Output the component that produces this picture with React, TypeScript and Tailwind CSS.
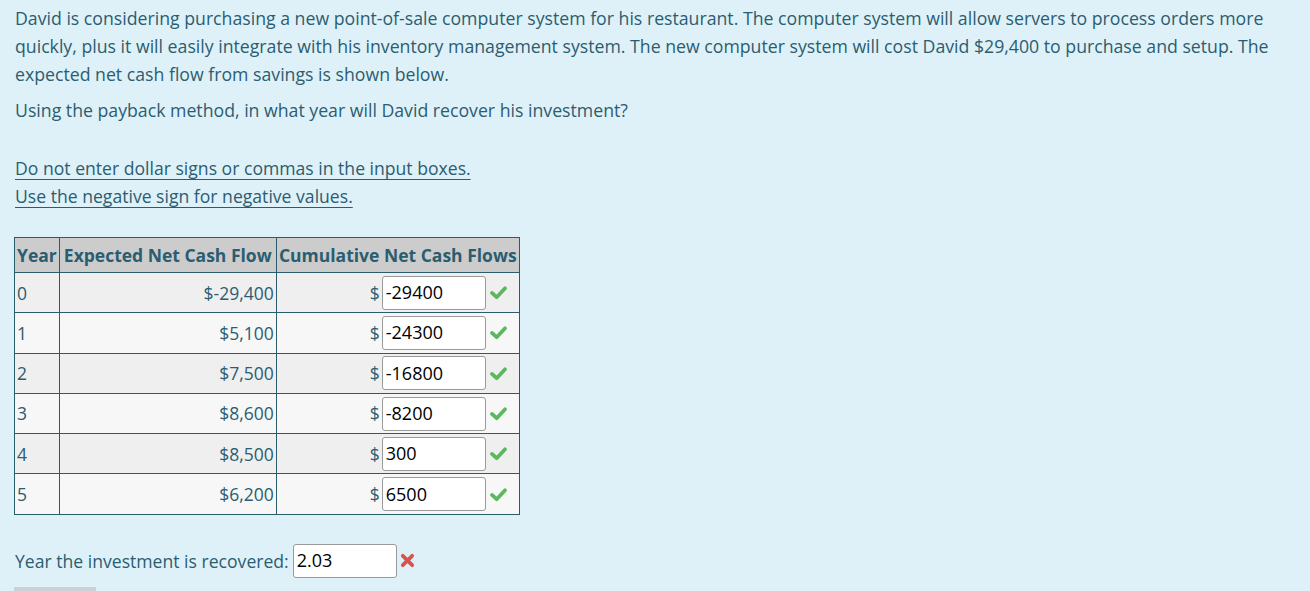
import React from 'react';

const rows = [
  { year: '0', flow: '$-29,400', cum: '-29400' },
  { year: '1', flow: '$5,100', cum: '-24300' },
  { year: '2', flow: '$7,500', cum: '-16800' },
  { year: '3', flow: '$8,600', cum: '-8200' },
  { year: '4', flow: '$8,500', cum: '300' },
  { year: '5', flow: '$6,200', cum: '6500' },
];

const Check = () => (
  <svg viewBox="0 0 20 16" className="ml-[3px] w-[19px] h-[15px] shrink-0">
    <polyline points="3,8.5 8,13 17,3.5" fill="none" stroke="#5cb85c" strokeWidth="4" strokeLinecap="round" strokeLinejoin="round" />
  </svg>
);

const Cross = () => (
  <svg viewBox="0 0 16 16" className="ml-[3px] w-[15px] h-[15px] shrink-0">
    <path d="M3 3 L13 13 M13 3 L3 13" fill="none" stroke="#d9534f" strokeWidth="4" strokeLinecap="round" />
  </svg>
);

export default function App() {
  return (
    <div
      className="w-[1310px] h-[591px] overflow-hidden bg-[#dff1f8] text-[#2b5d70] pl-[15px] pt-[4px]"
      style={{ fontFamily: '"Open Sans", "Noto Sans", sans-serif' }}
    >
      <p className="text-[17.7px] leading-[28px] whitespace-nowrap">
        David is considering purchasing a new point-of-sale computer system for his restaurant. The computer system will allow servers to process orders more
        <br />
        quickly, plus it will easily integrate with his inventory management system. The new computer system will cost David $29,400 to purchase and setup. The
        <br />
        expected net cash flow from savings is shown below.
      </p>
      <p className="text-[17.7px] leading-[28px] mt-[8px]">
        Using the payback method, in what year will David recover his investment?
      </p>

      <div className="mt-[30px] text-[17.6px] leading-[28px] underline underline-offset-[4px]">
        <div>Do not enter dollar signs or commas in the input boxes.</div>
        <div>Use the negative sign for negative values.</div>
      </div>

      {/* cash flow table */}
      <table className="mt-[27px] -ml-[1px] border-collapse border border-[#2a5d6b] text-[17.5px]">
        <thead>
          <tr className="bg-[#cccccc] h-[35px]">
            <th className="border border-[#2a5d6b] px-[2px] font-bold text-left">Year</th>
            <th className="border border-[#2a5d6b] px-0 font-bold w-[217px]">Expected Net Cash Flow</th>
            <th className="border border-[#2a5d6b] px-0 font-bold w-[243px]">Cumulative Net Cash Flows</th>
          </tr>
        </thead>
        <tbody>
          {rows.map((r, i) => (
            <tr key={r.year} className={`h-[40.3px] ${i % 2 === 0 ? 'bg-[#efefef]' : 'bg-[#f7f7f7]'}`}>
              <td className="border border-[#2a5d6b] px-[2px] align-middle">{r.year}</td>
              <td className="border border-[#2a5d6b] px-[2px] text-right">{r.flow}</td>
              <td className="border border-[#2a5d6b] pl-[2px] pr-[11px]">
                <div className="flex items-center justify-end">
                  <span className="mr-[2px]">$</span>
                  <div className="w-[104px] h-[34px] bg-white border border-[#9a9a9a] rounded-[3px] px-[3px] flex items-center text-[18px] text-black">
                    {r.cum}
                  </div>
                  <Check />
                </div>
              </td>
            </tr>
          ))}
        </tbody>
      </table>

      <div className="mt-[29px] flex items-center text-[17.6px]">
        <span>Year the investment is recovered:</span>
        <div className="ml-[4px] w-[104px] h-[34px] bg-white border border-[#9a9a9a] rounded-[3px] px-[3px] flex items-center text-[18px] text-black">
          2.03
        </div>
        <Cross />
      </div>

      <div className="mt-[9px] -ml-[1px] w-[82px] h-[10px] bg-[#cbd0d6]" />
    </div>
  );
}
